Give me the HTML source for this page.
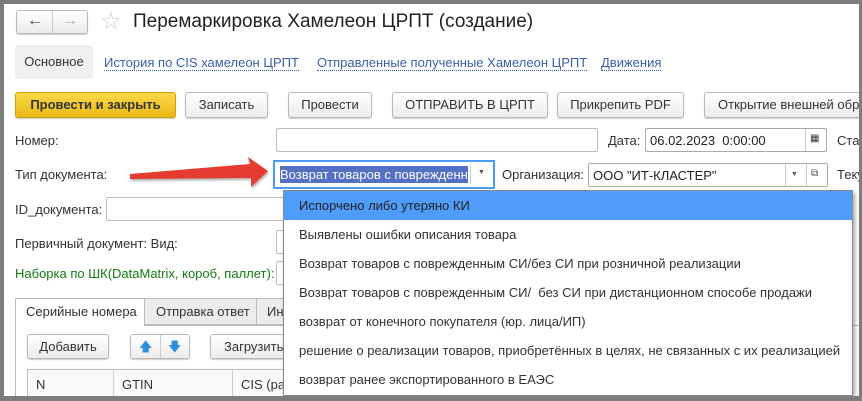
<!DOCTYPE html>
<html><head><meta charset="utf-8"><style>
*{box-sizing:border-box;margin:0;padding:0}
body{width:862px;height:401px;overflow:hidden;background:#fff;font-family:"Liberation Sans",Arial,sans-serif;font-size:13px;color:#333;position:relative}
.frame{position:absolute;left:0;top:0;width:862px;height:401px;border:4px solid #7d7d7d;border-right-width:3px;border-bottom-width:5px;pointer-events:none;z-index:50}
.a{position:absolute;white-space:nowrap}
.btn{position:absolute;height:26px;border:1px solid #b9b9b9;border-radius:3px;background:linear-gradient(#fff,#ececec);box-shadow:0 1px 1px rgba(0,0,0,.2);text-align:center;line-height:24px;color:#333;font-size:13px}
.inp{position:absolute;border:1px solid #bdbdbd;border-radius:2px;background:#fff;height:24px}
.lnk{position:absolute;color:#3a5fa8;border-bottom:1px dotted #3a5fa8;line-height:15px}
.dd{position:absolute;left:283px;top:190px;width:570px;height:206px;background:#fff;border:1px solid #8a8a8a;box-shadow:2px 3px 4px rgba(0,0,0,.35);z-index:20}
.dd div{height:29px;line-height:29px;padding-left:15px;font-size:13px;color:#333}
</style></head><body>
<div class="frame"></div>
<div class="btn" style="left:16px;top:10px;width:72px;height:24px;border-radius:3px"></div>
<div class="a" style="left:52px;top:11px;width:1px;height:22px;background:#ccc"></div>
<div class="a" style="left:27px;top:12px;font-size:16px;color:#444;font-weight:bold">&#8592;</div>
<div class="a" style="left:62px;top:12px;font-size:16px;color:#aaa;font-weight:bold">&#8594;</div>
<div class="a" style="left:100px;top:7px;font-size:24px;color:#ccc">&#9734;</div>
<div class="a" style="left:133px;top:11px;font-size:19px;color:#222">Перемаркировка Хамелеон ЦРПТ (создание)</div>
<div class="a" style="left:15px;top:45px;width:78px;height:34px;background:#f0f0f0;border-radius:3px;line-height:34px;text-align:center;color:#333">Основное</div>
<div class="lnk" style="left:104px;top:55px">История по CIS хамелеон ЦРПТ</div>
<div class="lnk" style="left:317px;top:55px">Отправленные полученные Хамелеон ЦРПТ</div>
<div class="lnk" style="left:601px;top:55px">Движения</div>
<div class="btn" style="left:15px;top:92px;width:161px;background:linear-gradient(#fbd94a,#eab814);border-color:#c9a20e;font-weight:bold;color:#333">Провести и закрыть</div>
<div class="btn" style="left:185px;top:92px;width:83px">Записать</div>
<div class="btn" style="left:288px;top:92px;width:84px">Провести</div>
<div class="btn" style="left:392px;top:92px;width:156px">ОТПРАВИТЬ В ЦРПТ</div>
<div class="btn" style="left:557px;top:92px;width:127px">Прикрепить PDF</div>
<div class="btn" style="left:704px;top:92px;width:170px;text-align:left;padding-left:13px">Открытие внешней обра</div>
<div class="a" style="left:15px;top:133px">Номер:</div>
<div class="inp" style="left:276px;top:128px;width:322px"></div>
<div class="a" style="left:608px;top:133px">Дата:</div>
<div class="inp" style="left:645px;top:128px;width:182px;border-color:#a9a9a9"><span class="a" style="left:4px;top:4px;color:#222">06.02.2023&nbsp;&nbsp;0:00:00</span><span class="a" style="left:159px;top:0;width:1px;height:22px;background:#ccc"></span><span class="a" style="left:164px;top:4px;font-size:10px">&#9638;</span></div>
<div class="a" style="left:837px;top:133px">Стат</div>
<div class="a" style="left:15px;top:167px">Тип документа:</div>
<div class="a" style="left:273px;top:160px;width:222px;height:29px;border:2px solid #4d9cf5;background:#fff"><span class="a" style="left:5px;top:4px;background:#5470c4;color:#fff;line-height:17px;width:188px;overflow:hidden">Возврат товаров с поврежденн</span><span class="a" style="left:195px;top:3px;width:1px;height:19px;background:#ccc"></span><span class="a" style="left:203px;top:7px;font-size:7px;color:#555">&#9660;</span></div>
<div class="a" style="left:502px;top:167px">Организация:</div>
<div class="inp" style="left:588px;top:163px;width:240px;border-color:#a9a9a9"><span class="a" style="left:4px;top:4px;color:#222">ООО "ИТ-КЛАСТЕР"</span><span class="a" style="left:196px;top:0;width:1px;height:22px;background:#ccc"></span><span class="a" style="left:202px;top:7px;font-size:7px;color:#555">&#9660;</span><span class="a" style="left:217px;top:0;width:1px;height:22px;background:#ccc"></span><span class="a" style="left:222px;top:4px;font-size:10px;color:#555">&#10697;</span></div>
<div class="a" style="left:837px;top:167px">Теку</div>
<svg class="a" style="left:0;top:0;z-index:10" width="300" height="200"><polygon points="130,174 250,164 248,157 268,171 251,187 251,178 130,179" fill="#e53b30" style="filter:drop-shadow(1px 2px 1px rgba(0,0,0,.3))"/></svg>
<div class="a" style="left:15px;top:202px">ID_документа:</div>
<div class="inp" style="left:106px;top:197px;width:190px"></div>
<div class="a" style="left:15px;top:236px">Первичный документ: Вид:</div>
<div class="inp" style="left:276px;top:230px;width:20px"></div>
<div class="a" style="left:15px;top:266px;color:#137b13">Наборка по ШК(DataMatrix, короб, паллет):</div>
<div class="inp" style="left:276px;top:261px;width:20px"></div>
<div class="a" style="left:15px;top:325px;width:850px;height:1px;background:#bbb"></div>
<div class="a" style="left:15px;top:298px;width:130px;height:28px;border:1px solid #bbb;border-bottom:none;background:#fff;line-height:26px;padding-left:10px">Серийные номера</div>
<div class="a" style="left:144px;top:298px;width:113px;height:27px;border:1px solid #bbb;background:#ececec;line-height:26px;padding-left:11px">Отправка ответ</div>
<div class="a" style="left:256px;top:298px;width:40px;height:27px;border:1px solid #bbb;background:#ececec;line-height:26px;padding-left:10px">Ин</div>
<div class="a" style="left:15px;top:326px;width:1px;height:70px;background:#bbb"></div>
<div class="btn" style="left:27px;top:334px;width:82px;height:25px">Добавить</div>
<div class="btn" style="left:130px;top:334px;width:60px;height:25px"><span class="a" style="left:29px;top:0;width:1px;height:23px;background:#ccc"></span><span class="a" style="left:8px;top:0;color:#2f8fd8">&#129093;</span><span class="a" style="left:37px;top:0;color:#2f8fd8">&#129095;</span></div>
<div class="btn" style="left:210px;top:334px;width:90px;height:25px;text-align:left;padding-left:13px">Загрузить</div>
<div class="a" style="left:27px;top:369px;width:280px;height:30px;border:1px solid #bbb;border-bottom:none;background:#fafafa"></div>
<div class="a" style="left:113px;top:369px;width:1px;height:30px;background:#ccc"></div>
<div class="a" style="left:232px;top:369px;width:1px;height:30px;background:#ccc"></div>
<div class="a" style="left:36px;top:377px">N</div>
<div class="a" style="left:122px;top:377px">GTIN</div>
<div class="a" style="left:241px;top:377px">CIS (ра</div>
<div class="dd">
<div style="background:#4f9cf9;color:#222">Испорчено либо утеряно КИ</div>
<div>Выявлены ошибки описания товара</div>
<div>Возврат товаров с поврежденным СИ/без СИ при розничной реализации</div>
<div>Возврат товаров с поврежденным СИ/&nbsp; без СИ при дистанционном способе продажи</div>
<div>возврат от конечного покупателя (юр. лица/ИП)</div>
<div>решение о реализации товаров, приобретённых в целях, не связанных с их реализацией</div>
<div>возврат ранее экспортированного в ЕАЭС</div>
</div>
</body></html>
